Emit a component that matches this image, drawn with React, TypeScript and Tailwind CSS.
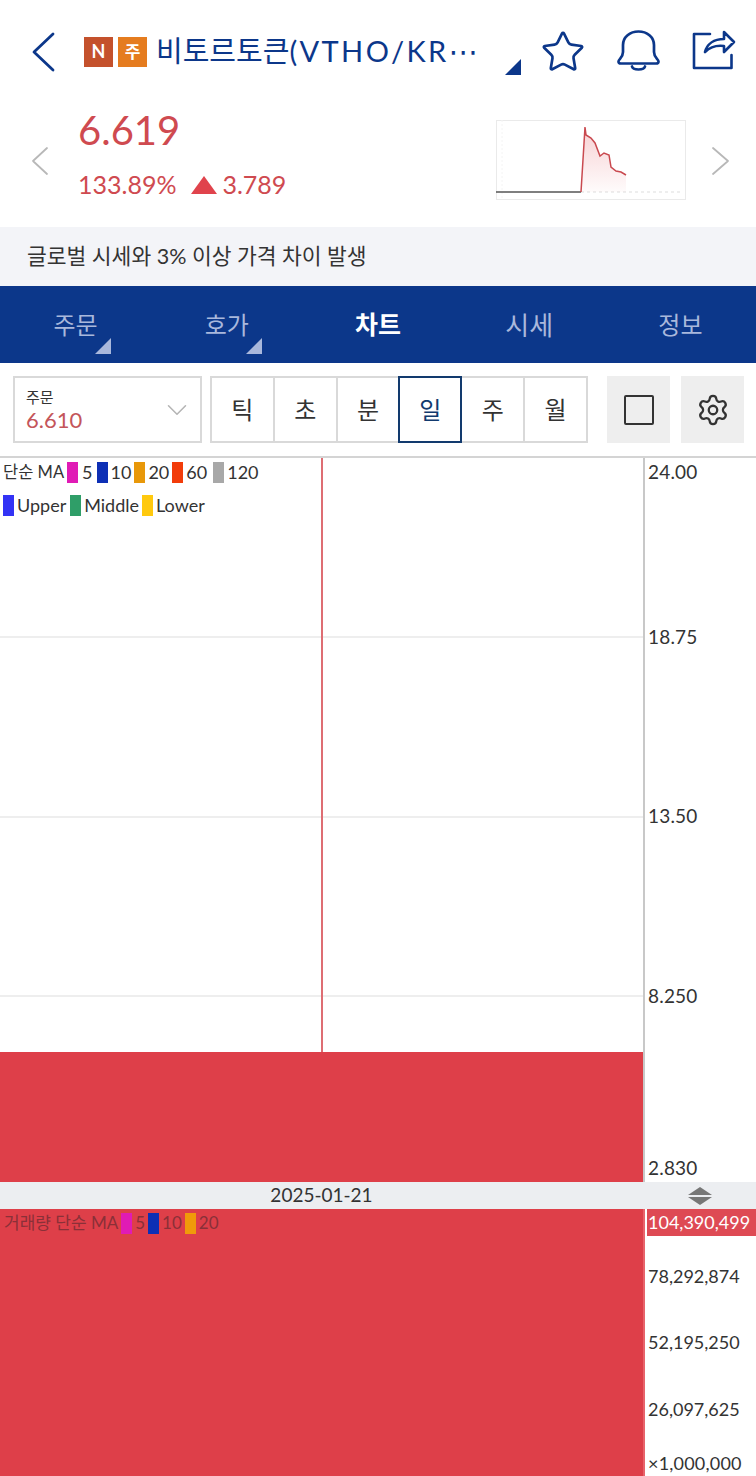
import React from 'react';
import { ChevronDown, Star, Settings } from 'lucide-react';

const tabs = [
  { label: '주문', marker: true, size: 'text-[24px]' },
  { label: '호가', marker: true, size: 'text-[24px]' },
  { label: '차트', active: true, size: 'text-[25px]' },
  { label: '시세', size: 'text-[26px]' },
  { label: '정보', size: 'text-[24px]' },
];

const periods = ['틱', '초', '분', '일', '주', '월'];

const Swatch = ({ color }: { color: string }) => <span className={`inline-block w-[11px] h-[21px] ${color}`} />;

const Corner = ({ color }: { color: string }) => (
  <svg width="16" height="16" viewBox="0 0 16 16" className={color}>
    <path d="M16 0V16H0Z" fill="currentColor" />
  </svg>
);

const Chevron = ({ flip, color, w, h, sw }: { flip?: boolean; color: string; w: number; h: number; sw: number }) => (
  <svg width={w} height={h} viewBox={`0 0 ${w} ${h}`} fill="none" stroke={color} strokeWidth={sw} strokeLinecap="round" strokeLinejoin="round" className="shrink-0">
    <path d={flip ? `M2 2L${w - 2} ${h / 2}L2 ${h - 2}` : `M${w - 2} 2L2 ${h / 2}L${w - 2} ${h - 2}`} />
  </svg>
);

const Sparkline = () => (
  <svg width="190" height="80" viewBox="0 0 190 80">
    <defs>
      <linearGradient id="spark" x1="0" y1="0" x2="0" y2="1">
        <stop offset="0" stopColor="#e0434c" stopOpacity="0.25" />
        <stop offset="1" stopColor="#e0434c" stopOpacity="0.02" />
      </linearGradient>
    </defs>
    <rect x="0.5" y="0.5" width="189" height="79" fill="none" stroke="#eaeaea" />
    <path d="M6 0V80" stroke="#f4f4f4" strokeDasharray="2 2" />
    <path d="M85 72H184" stroke="#dddddd" strokeDasharray="3 3" />
    <path d="M85 72L89 7L90 15L95 18L99 23L104 36L108 33L113 35L115 47L120 51L125 52L130 55V72Z" fill="url(#spark)" />
    <path d="M0 72H85" stroke="#555555" strokeWidth="1.5" fill="none" />
    <path d="M85 72L89 7L90 15L95 18L99 23L104 36L108 33L113 35L115 47L120 51L125 52L130 55" stroke="#c9494f" strokeWidth="1.5" fill="none" />
  </svg>
);

const BellIcon = () => (
  <svg width="47" height="46" viewBox="0 0 47 46" fill="none" stroke="#0c378a" strokeWidth="2.7" strokeLinecap="round" strokeLinejoin="round">
    <path d="M3.5 33.5C3.5 31 8 30 8 24V17C8 9 15 3.5 23.5 3.5C32 3.5 39 9 39 17V24C39 30 43.5 31 43.5 33.5C43.5 35 43 35.5 41 35.5H6C4 35.5 3.5 35 3.5 33.5Z" />
    <path d="M17 38.5C18 42.5 29 42.5 30 38.5" />
  </svg>
);

const ShareIcon = () => (
  <svg width="46" height="44" viewBox="0 0 46 44" fill="none" stroke="#0c378a" strokeWidth="2.6" strokeLinecap="round" strokeLinejoin="round">
    <path d="M19 6H3V40H40.5V27" />
    <path d="M14 24C16 16 23 11 33 11V4L43 14L33 24V18C25 17 19 19 14 24Z" />
  </svg>
);

export default function App() {
  return (
    <div className="w-full h-[1476px] overflow-hidden bg-white font-['Lato','Noto_Sans_CJK_KR',sans-serif] text-[#333]">
      {/* Title bar */}
      <div className="flex items-center h-[95px] pt-[8px]">
        <div className="ml-[32px]"><Chevron color="#0c378a" w={23} h={40} sw={2.8} /></div>
        <span className="ml-[29px] w-[29px] h-[30px] bg-[#c4512c] text-white text-[18px] font-bold flex items-center justify-center shrink-0">N</span>
        <span className="ml-[5px] w-[29px] h-[30px] bg-[#e57c1f] text-white text-[17px] font-bold flex items-center justify-center shrink-0">주</span>
        <div className="ml-[9px] w-[328px] whitespace-nowrap text-[29px] text-[#0c378a]">
          비토르토큰<span className="tracking-[2.4px]">(VTHO/KR</span><span className="font-['DejaVu_Sans'] text-[29px]">⋯</span>
        </div>
        <div className="ml-[21px] mt-[31px]"><Corner color="text-[#0c378a]" /></div>
        <Star className="ml-[19px] text-[#0c378a] shrink-0" size={46} strokeWidth={1.4} />
        <div className="ml-[29px] -mt-[2px]"><BellIcon /></div>
        <div className="ml-[29px] -mt-[4px]"><ShareIcon /></div>
      </div>

      {/* Price row */}
      <div className="flex items-center h-[132px] pb-[8px]">
        <div className="ml-[31px] mt-[7px]"><Chevron color="#b8b8b8" w={18} h={30} sw={1.8} /></div>
        <div className="ml-[29px] flex-1 mb-[2px]">
          <div className="text-[40px] leading-[50px] -mt-[2px] text-[#cf4a50]">6.619</div>
          <div className="flex items-center h-[40px] mt-[10px] text-[25px] text-[#cf4a50]">
            <span>133.89%</span>
            <span className="ml-[15px] mr-[5px] w-0 h-0 border-x-[13px] border-x-transparent border-b-[18px] border-b-[#e0434c]" />
            <span>3.789</span>
          </div>
        </div>
        <div className="mt-[6px]"><Sparkline /></div>
        <div className="ml-[25px] mr-[26px] mt-[7px]"><Chevron flip color="#b8b8b8" w={19} h={30} sw={1.8} /></div>
      </div>

      {/* Notice */}
      <div className="h-[59px] bg-[#f3f4f8] flex items-center pl-[27px] text-[21.5px] text-[#333]">글로벌 시세와 3% 이상 가격 차이 발생</div>

      {/* Tabs */}
      <div className="flex h-[77px] bg-[#0c378a]">
        {tabs.map((t) => (
          <div key={t.label} className={`relative flex-1 flex items-center justify-center pt-[1px] ${t.size} ${t.active ? 'text-white font-bold' : 'text-[#a9b8dc]'}`}>
            {t.label}
            {t.marker && (
              <div className="absolute right-[40px] bottom-[9px]"><Corner color="text-[#a9b8dc]" /></div>
            )}
          </div>
        ))}
      </div>

      {/* Toolbar */}
      <div className="flex h-[93px] pt-[13px] pl-[13px]">
        <div className="w-[189px] h-[67px] border-2 border-[#d9d9d9] flex items-center justify-between pl-[11px] pr-[6px]">
          <div className="flex flex-col">
            <span className="text-[15px] leading-[20px] text-[#333]">주문</span>
            <span className="text-[22px] leading-[26px] text-[#c4555a]">6.610</span>
          </div>
          <ChevronDown className="text-[#b5b5b5]" size={34} strokeWidth={1.1} />
        </div>
        <div className="ml-[8px] flex h-[67px] w-[378px] border-y-2 border-l-2 border-[#d9d9d9]">
          {periods.map((p) => (
            <div
              key={p}
              className={`w-[63px] flex items-center justify-center text-[24px] border-r-2 ${p === '일' ? 'border-2 border-[#123a6e] -my-[2px] w-[64px] -ml-[2px] text-[#123a6e]' : 'border-[#d9d9d9]'}`}
            >
              {p}
            </div>
          ))}
        </div>
        <div className="ml-[19px] w-[63px] h-[67px] bg-[#eeeeee] flex items-center justify-center">
          <span className="w-[30px] h-[30px] border-2 border-[#333] rounded-[2px]" />
        </div>
        <div className="ml-[11px] w-[63px] h-[67px] bg-[#eeeeee] flex items-center justify-center">
          <Settings className="text-[#333]" size={34} strokeWidth={1.6} />
        </div>
      </div>

      {/* Price chart */}
      <div className="flex h-[726px] border-t-2 border-[#d4d4d4]">
        <div className="relative w-[643px] flex flex-col border-r-2 border-[#c8c8c8] box-content">
          <div className="absolute left-[321px] top-0 h-[594px] w-[2px] bg-[#de6d73]" />
          <div className="h-[180px] border-b-2 border-[#eeeeee] pl-[3px]">
            <div className="flex items-center gap-[3px] h-[28px] text-[18px]">
              <span className="text-[16.5px]">단순 MA</span>
              <Swatch color="bg-[#e01bb5]" /><span className="mx-[1px]">5</span>
              <Swatch color="bg-[#0d2fb5]" /><span>10</span>
              <Swatch color="bg-[#e8980a]" /><span>20</span>
              <Swatch color="bg-[#f23c0a]" /><span className="mr-[3px]">60</span>
              <Swatch color="bg-[#a8a8a8]" /><span>120</span>
            </div>
            <div className="flex items-center gap-[3px] h-[34px] mt-[2px] text-[18px]">
              <Swatch color="bg-[#3333f5]" /><span className="mr-[1px]">Upper</span>
              <Swatch color="bg-[#2f9e68]" /><span>Middle</span>
              <Swatch color="bg-[#ffc90e]" /><span>Lower</span>
            </div>
          </div>
          <div className="h-[180px] border-b-2 border-[#eeeeee]" />
          <div className="h-[179px] border-b-2 border-[#eeeeee]" />
          <div className="h-[55px]" />
          <div className="flex-1 bg-[#de3f49]" />
        </div>
        <div className="flex-1 flex flex-col pl-[3px] text-[19px] leading-[24px] tracking-[0.2px] text-[#333]">
          <div className="mt-[2px]">24.00</div>
          <div className="mt-[141px]">18.75</div>
          <div className="mt-[155px]">13.50</div>
          <div className="mt-[156px]">8.250</div>
          <div className="mt-[148px]">2.830</div>
        </div>
      </div>

      {/* Date bar */}
      <div className="flex h-[27px] bg-[#eceef1]">
        <div className="w-[643px] flex items-center justify-center text-[19px]">2025-01-21</div>
        <div className="flex-1 flex flex-col items-center justify-center gap-[2px]">
          <span className="w-0 h-0 border-x-[12px] border-x-transparent border-b-[8px] border-b-[#777]" />
          <span className="w-0 h-0 border-x-[12px] border-x-transparent border-t-[8px] border-t-[#777]" />
        </div>
      </div>

      {/* Volume chart */}
      <div className="flex h-[267px]">
        <div className="w-[645px] shrink-0 border-r-2 border-[#e8636b] bg-[#de3f49] pl-[4px]">
          <div className="flex items-center gap-[3px] h-[28px] text-[17px] text-[#8a3038]">
            거래량 단순 MA
            <Swatch color="bg-[#e01bb5]" /><span>5</span>
            <Swatch color="bg-[#0d2fb5]" /><span>10</span>
            <Swatch color="bg-[#f09a0a]" /><span>20</span>
          </div>
        </div>
        <div className="flex-1 flex flex-col text-[18px] leading-[24px] pl-[2px] text-[#333]">
          <div className="bg-[#de4a54] text-white pl-[1px] h-[27px] leading-[26px]">104,390,499</div>
          <div className="mt-[28px] pl-[1px]">78,292,874</div>
          <div className="mt-[42px] pl-[1px]">52,195,250</div>
          <div className="mt-[43px] pl-[1px]">26,097,625</div>
          <div className="mt-[30px] pl-[1px] tracking-[0.2px]">×1,000,000</div>
        </div>
      </div>
    </div>
  );
}
